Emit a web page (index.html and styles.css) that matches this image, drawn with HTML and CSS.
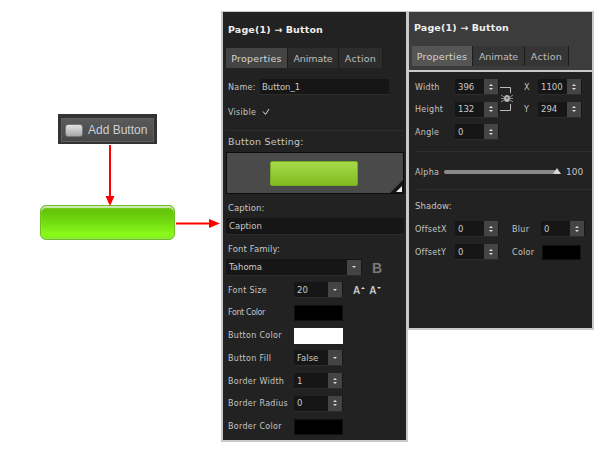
FILE: index.html
```html
<!DOCTYPE html>
<html lang="en">
<head>
<meta charset="utf-8">
<title>Button properties</title>
<link rel="stylesheet" href="styles.css">
</head>
<body>
<div class="canvas">
  <div class="add-button"><div class="add-inner"><span class="add-icon"></span><span>Add Button</span></div></div>
  <div class="green-button"></div>
  <svg class="arrow arrow-down" width="10" height="61" viewBox="0 0 10 61"><path d="M4 0h2v52H4z" fill="#f00"/><path d="M0.5 51h9L5 61z" fill="#f00"/></svg>
  <svg class="arrow arrow-right" width="44" height="9" viewBox="0 0 44 9"><path d="M0 3.500h34v2H0z" fill="#f00"/><path d="M33 0l11 4.500-11 4.500z" fill="#f00"/></svg>

  <section class="panel panel-main">
    <h2 class="title title-main">Page(1) → Button</h2>
    <div class="tabs"><span class="tab tab-on t1">Properties</span><span class="tab t2">Animate</span><span class="tab t3">Action</span></div>
    <div class="row name-row"><span class="lbl lbl-name">Name:</span><span class="field f-name">Button_1</span></div>
    <div class="row visible-row"><span class="lbl lbl-vis">Visible</span><svg class="check" width="8" height="8" viewBox="0 0 8 8"><path d="M1 3.500l2.500 3L7 1" fill="none" stroke="#ddd" stroke-width="1"/></svg></div>
    <div class="divider"></div>
    <div class="head head-setting">Button Setting:</div>
    <div class="preview"><div class="preview-btn"></div><span class="corner"><svg width="6" height="6" viewBox="0 0 6 6"><path d="M6 0v6H0z" fill="#eee"/></svg></span></div>
    <div class="head head-caption">Caption:</div>
    <div class="field f-caption">Caption</div>
    <div class="head head-family">Font Family:</div>
    <div class="family-row">
      <div class="field f-family"><span>Tahoma</span><span class="btn-arrow"><b class="tri-down"></b></span></div>
      <span class="bold-b">B</span>
    </div>
    <div class="row form-row first-form">
      <span class="lbl lbl-form">Font Size</span>
      <div class="field f-form"><span>20</span><span class="btn-arrow"><b class="tri-down"></b></span></div>
      <span class="size-a size-up">A<b class="tri-up"></b></span><span class="size-a size-down">A<b class="tri-down"></b></span>
    </div>
    <div class="row form-row"><span class="lbl lbl-form lbl-tight">Font Color</span><span class="swatch"></span></div>
    <div class="row form-row"><span class="lbl lbl-form">Button Color</span><span class="swatch swatch-white"></span></div>
    <div class="row form-row"><span class="lbl lbl-form">Button Fill</span><div class="field f-form"><span>False</span><span class="btn-arrow"><b class="tri-down"></b></span></div></div>
    <div class="row form-row"><span class="lbl lbl-form">Border Width</span><div class="field f-form"><span>1</span><span class="btn-spin"><b class="tri-up"></b><b class="tri-down"></b></span></div></div>
    <div class="row form-row"><span class="lbl lbl-form">Border Radius</span><div class="field f-form"><span>0</span><span class="btn-spin"><b class="tri-up"></b><b class="tri-down"></b></span></div></div>
    <div class="row form-row"><span class="lbl lbl-form">Border Color</span><span class="swatch"></span></div>
  </section>

  <section class="panel panel-side">
    <header class="side-top">
      <h2 class="title title-side">Page(1) → Button</h2>
      <div class="tabs tabs-side"><span class="tab tab-on t1 s1">Properties</span><span class="tab t2 s2">Animate</span><span class="tab t3 s3">Action</span></div>
    </header>
    <div class="side-body">
      <div class="geo">
        <span class="lbl g-lbl">Width</span><div class="field f-num"><span>396</span><span class="btn-spin"><b class="tri-up"></b><b class="tri-down"></b></span></div>
        <svg class="link" width="16" height="26" viewBox="0 0 16 26"><path d="M0 1.500h10.500V7M0 24.500h10.500V18" fill="none" stroke="#bbb" stroke-width="1"/><path d="M1 9l3 2M1 12.500h3M1 16l3-2M13 9l-3 2M13 12.500h-3M13 16l-3-2" stroke="#8a8a8a" stroke-width="1" fill="none"/><ellipse cx="7" cy="12.500" rx="3" ry="3.500" fill="#b5b5b5"/><circle cx="7" cy="12" r="1" fill="#555"/></svg>
        <span class="lbl xy">X</span><div class="field f-num"><span>1100</span><span class="btn-spin"><b class="tri-up"></b><b class="tri-down"></b></span></div>
        <span class="lbl g-lbl">Height</span><div class="field f-num"><span>132</span><span class="btn-spin"><b class="tri-up"></b><b class="tri-down"></b></span></div>
        <span class="lbl xy">Y</span><div class="field f-num"><span>294</span><span class="btn-spin"><b class="tri-up"></b><b class="tri-down"></b></span></div>
        <span class="lbl g-lbl">Angle</span><div class="field f-num"><span>0</span><span class="btn-spin"><b class="tri-up"></b><b class="tri-down"></b></span></div>
      </div>
      <div class="divider d-side"></div>
      <div class="alpha"><span class="lbl alpha-lbl">Alpha</span><span class="slider"><span class="thumb"></span></span><span class="lbl alpha-val">100</span></div>
      <div class="divider d-side"></div>
      <div class="head shadow-head">Shadow:</div>
      <div class="shadow-grid">
        <span class="lbl">OffsetX</span><div class="field f-num"><span>0</span><span class="btn-spin"><b class="tri-up"></b><b class="tri-down"></b></span></div>
        <span class="lbl">Blur</span><div class="field f-num"><span>0</span><span class="btn-spin"><b class="tri-up"></b><b class="tri-down"></b></span></div>
        <span class="lbl">OffsetY</span><div class="field f-num"><span>0</span><span class="btn-spin"><b class="tri-up"></b><b class="tri-down"></b></span></div>
        <span class="lbl">Color</span><span class="swatch swatch-small"></span>
      </div>
    </div>
  </section>
</div>
</body>
</html>
```
FILE: styles.css
```css
* { box-sizing: border-box; }
html, body { margin: 0; background: #fff; }
body { width: 600px; height: 450px; overflow: hidden; font: 8px "DejaVu Sans", sans-serif; color: #c9c9c9; }
.canvas { position: relative; width: 600px; height: 450px; }
.add-button { position: absolute; left: 58px; top: 114px; width: 99px; height: 30px; background: #333; padding: 4px 3px 2px; }
.add-inner { height: 24px; background: linear-gradient(#5a5a5a, #474747); border: 1px solid #606060; display: flex; align-items: center; gap: 5px; padding-left: 3px; font: 12px "Liberation Sans", sans-serif; color: #c8d0da; white-space: nowrap; }
.add-icon { width: 18px; height: 13px; border-radius: 3px; background: linear-gradient(#e2e2e2, #a8a8a8); border: 1px solid #777; }
.green-button { position: absolute; left: 40px; top: 205px; width: 135px; height: 35px; border-radius: 6px; background: linear-gradient(#6ccb0c 0, #66c40a 15%, #72dc10 50%, #8afa1a 85%, #82ee16 100%); border: 1px solid #6cc020; box-shadow: inset 0 2px 1px #d2e8c0, inset 0 -1px 0 #98e460; }
.arrow { position: absolute; }
.arrow-down { left: 105px; top: 145px; }
.arrow-right { left: 176px; top: 219px; }
.panel { position: absolute; top: 11px; background: #222; border: 2px solid #c9c9c9; border-top-width: 1px; }
.panel-main { left: 221px; width: 187px; height: 431px; padding: 0 3px; }
.panel-side { left: 407px; width: 187px; height: 319px; }
.title { margin: 0; font: bold 9.500px/14px "DejaVu Sans", sans-serif; color: #eee; letter-spacing: 0.15px; white-space: nowrap; }
.title-main { padding: 11px 0 0 2px; }
.tabs { display: flex; height: 20px; margin-top: 11px; width: 157px; }
.tab { display: flex; align-items: center; justify-content: center; background: #2d2d2d; border-right: 1px solid #1c1c1c; font-size: 9.500px; color: #bdbdbd; letter-spacing: 0.25px; }
.tab-on { background: #444; color: #d6d6d6; }
.t1 { width: 62px; } .t2 { width: 51px; letter-spacing: -0.1px; } .t3 { width: 44px; }
.row { display: flex; align-items: center; }
.lbl { white-space: nowrap; color: #c4c4c4; letter-spacing: 0.3px; }
.field { display: flex; align-items: center; justify-content: space-between; background: #161616; color: #c9c9c9; height: 16px; font-size: 8.500px; padding-left: 3px; border-bottom: 1px solid #2c2c2c; }
.name-row { height: 16px; margin-top: 11px; }
.lbl-name { width: 34px; padding-left: 2px; }
.f-name { width: 129px; height: 16px; padding-left: 2px; }
.visible-row { margin-top: 9px; height: 16px; }
.lbl-vis { width: 36px; padding-left: 2px; }
.divider { height: 1px; background: #2e2e2e; }
.panel-main > .divider { margin-top: 10px; }
.head { font-size: 8.500px; letter-spacing: 0.1px; color: #c6c6c6; line-height: 12px; padding-left: 2px; }
.head-setting { margin-top: 5px; font-size: 9.500px; letter-spacing: 0.25px; }
.preview { position: relative; display: flex; align-items: center; justify-content: center; width: 178px; height: 42px; margin-top: 4px; background: #4a4a4a; border: 1px solid #0c0c0c; }
.preview-btn { width: 88px; height: 25px; margin-right: 2px; border-radius: 2px; background: linear-gradient(#a6d84a, #80bd22); border: 1px solid #74ad22; }
.corner { position: absolute; right: 0; bottom: 0; width: 0; height: 0; border-style: solid; border-width: 0 0 13px 13px; border-color: transparent transparent #151515 transparent; }
.corner svg { position: absolute; right: 1px; top: 6px; }
.head-caption { margin-top: 8px; }
.f-caption { width: 178px; height: 17px; margin-top: 4px; }
.head-family { margin-top: 8px; }
.family-row { display: flex; align-items: center; margin-top: 4px; }
.f-family { width: 136px; height: 17px; }
.bold-b { margin-left: 10px; font: bold 14px "Liberation Sans", sans-serif; color: #7a7a7a; }
.btn-arrow, .btn-spin { display: flex; align-items: center; justify-content: center; flex: none; width: 14px; height: 15px; margin-right: 1px; background: #444; }
.btn-spin { flex-direction: column; gap: 2px; }
.tri-up, .tri-down { display: block; width: 0; height: 0; border-style: solid; border-color: transparent; }
.tri-up { border-width: 0 2px 2px; border-bottom-color: #ddd; }
.tri-down { border-width: 2px 2px 0; border-top-color: #ddd; }
.form-row { height: 16px; margin-top: 6.800px; }
.first-form { margin-top: 6px; }
.lbl-form { width: 68px; padding-left: 2px; }
.lbl-tight { letter-spacing: -0.4px; }
.f-form { width: 49px; }
.swatch { display: block; width: 49px; height: 16px; background: #000; border: 1px solid #111; }
.swatch-white { background: #fff; border-color: #fff; }
.size-a { display: flex; align-items: flex-start; font: bold 10px "Liberation Sans", sans-serif; color: #c4c4c4; }
.size-a b { margin: 2px 0 0 1px; }
.size-up { margin-left: 10px; }
.size-down { margin-left: 4px; }
.side-top { height: 60px; background: #3c3c3c; border-bottom: 2px solid #c9c9c9; padding: 9px 0 0 3px; }
.title-side { padding-left: 2px; }
.tabs-side { margin-top: 11px; }
.tabs-side .tab { background: #353535; }
.tabs-side .tab-on { background: #555; }
.s1 { width: 61px; } .s2 { width: 52px; } .s3 { width: 44px; }
.side-body { padding: 7px 6px 0 6px; }
.geo { position: relative; display: grid; grid-template-columns: 40px 44px 24px 15px 44px; grid-auto-rows: 16px; row-gap: 6.500px; align-items: center; }
.link { position: absolute; left: 85px; top: 7px; }
.g-lbl { grid-column: 1; }
.xy { grid-column: 4; padding-left: 1px; }
.g-lbl + .f-num { grid-column: 2; }
.f-num { width: 44px; }
.d-side { margin: 11px -6px 0 0; }
.alpha { display: flex; align-items: center; height: 12px; margin-top: 14px; }
.alpha-lbl { width: 29px; }
.slider { position: relative; display: block; width: 113px; height: 4px; background: #8a8a8a; border-radius: 2px; }
.thumb { position: absolute; right: -4px; top: -2px; width: 0; height: 0; border-style: solid; border-width: 0 4px 6px; border-color: transparent transparent #d8d8d8; }
.alpha-val { margin-left: 9px; font-size: 9px; letter-spacing: 0; }
.shadow-head { margin-top: 10px; padding-left: 0; }
.shadow-grid { display: grid; grid-template-columns: 40px 44px 13px 29px 44px; grid-auto-rows: 16px; row-gap: 7px; align-items: center; margin-top: 9px; }
.shadow-grid > .lbl:nth-child(3), .shadow-grid > .lbl:nth-child(7) { grid-column: 4; }
.swatch-small { width: 39px; height: 15px; margin-left: 1px; }
```
